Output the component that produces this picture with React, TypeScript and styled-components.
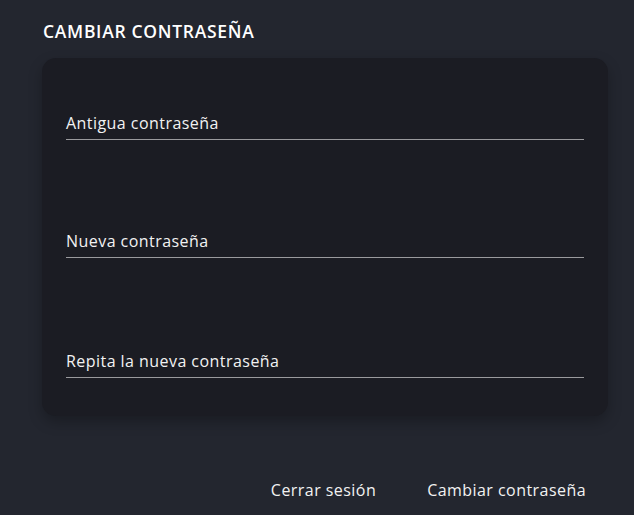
import React from "react";
import styled, { createGlobalStyle } from "styled-components";

const Global = createGlobalStyle`
  html, body { margin: 0; padding: 0; background: #23262f; }
  body { font-family: "Open Sans", "Liberation Sans", sans-serif; color: #ffffff; }
  * { box-sizing: border-box; }
`;

const Page = styled.div`
  width: 634px;
  height: 515px;
  padding: 21px 26px 0 42px;
  display: flex;
  flex-direction: column;
`;

const Title = styled.h2`
  margin: 0 0 17px 1px;
  font-size: 17.5px;
  font-weight: 600;
  line-height: 20px;
  letter-spacing: 0.7px;
  color: #ffffff;
`;

const Card = styled.div`
  width: 566px;
  height: 358px;
  background: #1b1c23;
  border-radius: 14px;
  box-shadow: 0 6px 14px rgba(0, 0, 0, 0.25);
  padding: 0 24px;
  display: flex;
  flex-direction: column;
`;

const Field = styled.label<{ $top: number }>`
  display: flex;
  flex-direction: column;
  margin-top: ${(p) => p.$top}px;
`;

const Label = styled.span`
  font-size: 16px;
  line-height: 20px;
  letter-spacing: 0.45px;
  color: #f2f2f2;
  padding-bottom: 6px;
`;

const Input = styled.input`
  width: 100%;
  height: 0;
  border: none;
  border-bottom: 1.5px solid #9a9a9d;
  background: transparent;
  outline: none;
  padding: 0;
  color: #fff;
`;

const Actions = styled.div`
  display: flex;
  justify-content: flex-end;
  gap: 51px;
  margin-top: 64px;
  padding-right: 22px;
`;

const Button = styled.button`
  background: none;
  border: none;
  padding: 0;
  font-family: inherit;
  font-size: 16px;
  line-height: 20px;
  letter-spacing: 0.45px;
  color: #f2f2f2;
  cursor: pointer;
`;

export default function App() {
  return (
    <>
      <Global />
      <Page>
        <Title>CAMBIAR CONTRASEÑA</Title>
        <Card>
          <Field $top={55}>
            <Label>Antigua contraseña</Label>
            <Input type="password" />
          </Field>
          <Field $top={91}>
            <Label>Nueva contraseña</Label>
            <Input type="password" />
          </Field>
          <Field $top={93}>
            <Label>Repita la nueva contraseña</Label>
            <Input type="password" />
          </Field>
        </Card>
        <Actions>
          <Button>Cerrar sesión</Button>
          <Button>Cambiar contraseña</Button>
        </Actions>
      </Page>
    </>
  );
}
